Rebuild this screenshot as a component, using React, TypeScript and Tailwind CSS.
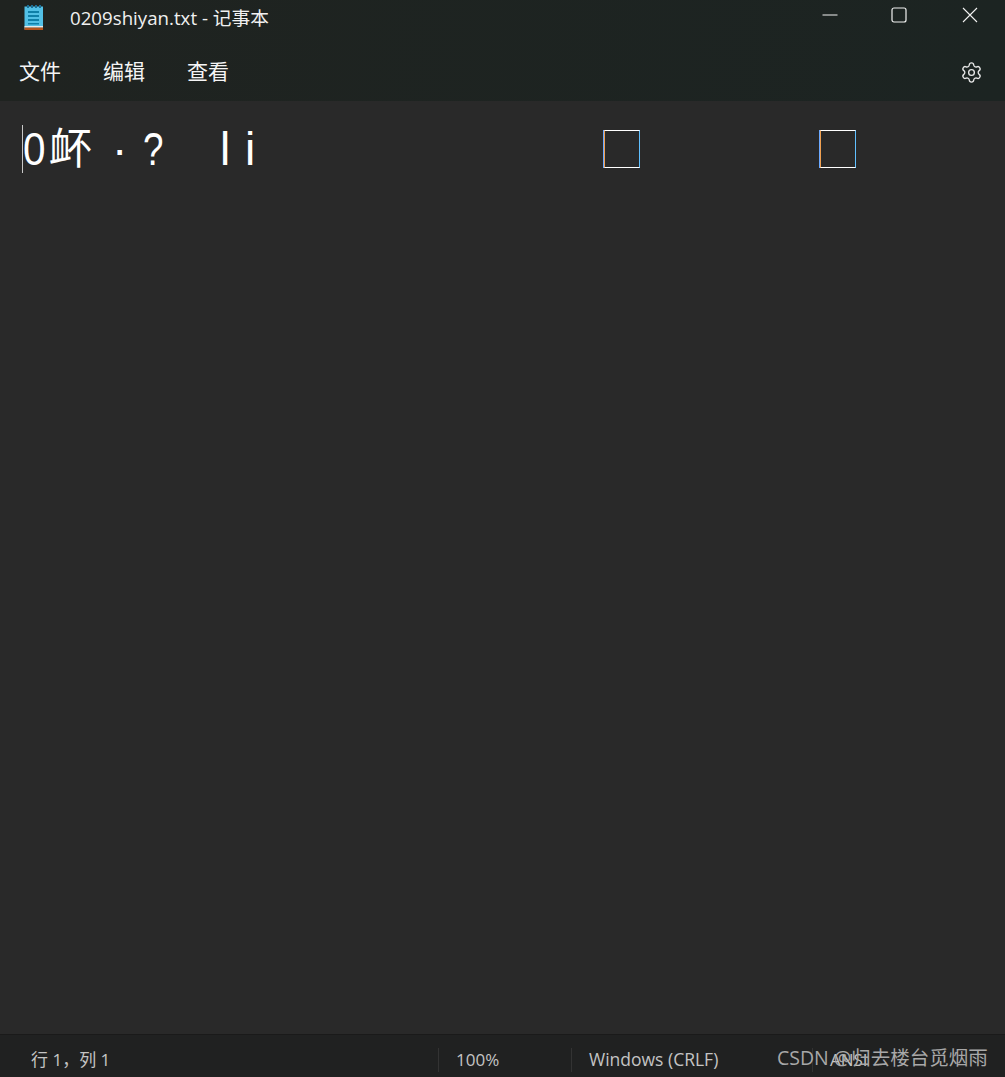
import { Settings } from 'lucide-react';

const font = "font-['Open_Sans','Noto_Sans_CJK_SC',sans-serif]";

function NotepadIcon() {
  return (
    <svg width="20" height="25" viewBox="0 0 20 25">
      <rect x="0.5" y="1.5" width="18.5" height="23" fill="#52c0e6" />
      <rect x="0.5" y="21" width="18.5" height="1.5" fill="#e8e8e8" />
      <rect x="0.5" y="22.5" width="18.5" height="2.5" fill="#b5521b" />
      <rect x="3" y="0" width="2" height="3" fill="#1c6f96" />
      <rect x="7" y="0" width="2" height="3" fill="#1c6f96" />
      <rect x="11" y="0" width="2" height="3" fill="#1c6f96" />
      <rect x="15" y="0" width="2" height="3" fill="#1c6f96" />
      <rect x="4" y="6" width="11" height="2" fill="#0f7fa8" />
      <rect x="4" y="10" width="11" height="2" fill="#0f7fa8" />
      <rect x="4" y="14" width="11" height="2" fill="#0f7fa8" />
      <rect x="4" y="18" width="11" height="1.5" fill="#0f7fa8" />
    </svg>
  );
}

function MissingGlyph() {
  return (
    <span className="block h-[38px] w-[36px] border border-y-white border-l-[#f0a050] border-r-[#60c0ff] shadow-[-1px_0_0_#6aa8ff]" />
  );
}

export default function App() {
  return (
    <div className={`flex h-[1077px] w-[1005px] flex-col overflow-hidden bg-[#292929] text-white ${font}`}>
      <header className="h-[101px] shrink-0 bg-gradient-to-r from-[#1f2320] to-[#1c2422]">
        <div className="flex h-[36px] items-center">
          <div className="ml-[24px] mt-[-2px]">
            <NotepadIcon />
          </div>
          <span className="ml-[26px] text-[18.7px] leading-[36px] text-[#f0f0f0]">0209shiyan.txt - 记事本</span>
          <div className="ml-auto flex items-center">
            <svg width="16" height="16" viewBox="0 0 16 16" className="mr-[53px] mt-[-6px]">
              <path d="M0.5 8H15.5" stroke="#f2f2f2" strokeWidth="1" />
            </svg>
            <svg width="16" height="16" viewBox="0 0 16 16" className="mr-[55px] mt-[-6px]">
              <rect x="1" y="1" width="14" height="14" rx="2" fill="none" stroke="#f2f2f2" strokeWidth="1.2" />
            </svg>
            <svg width="16" height="16" viewBox="0 0 16 16" className="mr-[27px] mt-[-6px]">
              <path d="M1 1L15 15M15 1L1 15" stroke="#f2f2f2" strokeWidth="1.1" />
            </svg>
          </div>
        </div>
        <nav className="flex h-[65px] items-center pt-[7px] text-[21px] text-[#f5f5f5]">
          <span className="ml-[19px]">文件</span>
          <span className="ml-[42px]">编辑</span>
          <span className="ml-[42px]">查看</span>
          <Settings className="ml-auto mr-[22px] text-[#e8e8e8]" size={23} strokeWidth={1.4} />
        </nav>
      </header>

      <main className="relative min-h-0 flex-1 pt-[24px]">
        <div className="flex h-[48px] items-center pl-[22px] font-['Liberation_Sans','Noto_Sans_CJK_SC',sans-serif] text-[46px] leading-[48px]">
          <span className="h-[48px] w-[27px] border-l border-l-[#c8c8c8]">
            <span className="block origin-left scale-x-[0.88]">0</span>
          </span>
          <span className="w-[43px] text-[43px]">衃</span>
          <span className="ml-[20px] w-[14px]">·</span>
          <span className="ml-[17px] w-[20px]">
            <span className="block origin-left scale-x-[0.8]">?</span>
          </span>
          <span className="ml-[57px] w-[25px]">l</span>
          <span className="w-[12px]">i</span>
          <span className="ml-[347px]">
            <MissingGlyph />
          </span>
          <span className="ml-[180px]">
            <MissingGlyph />
          </span>
        </div>
      </main>

      <footer className="flex h-[43px] shrink-0 items-center border-t border-[#1a1a1a] bg-[#202121] pt-[7px] text-[17px] text-[#c4c4c4]">
        <span className="ml-[31px] w-[407px]">行 1，列 1</span>
        <span className="h-[24px] w-px bg-[#333]" />
        <span className="ml-[17px] w-[115px]">100%</span>
        <span className="h-[24px] w-px bg-[#333]" />
        <span className="ml-[17px] w-[223px] text-[17.5px]">Windows (CRLF)</span>
        <span className="h-[24px] w-px bg-[#333]" />
        <span className="ml-[17px]">ANSI</span>
      </footer>

      <div className="absolute left-[777px] top-[1044px] text-[19.5px] leading-[28px] text-[#a8a8a8]">CSDN @归去楼台觅烟雨</div>
    </div>
  );
}
